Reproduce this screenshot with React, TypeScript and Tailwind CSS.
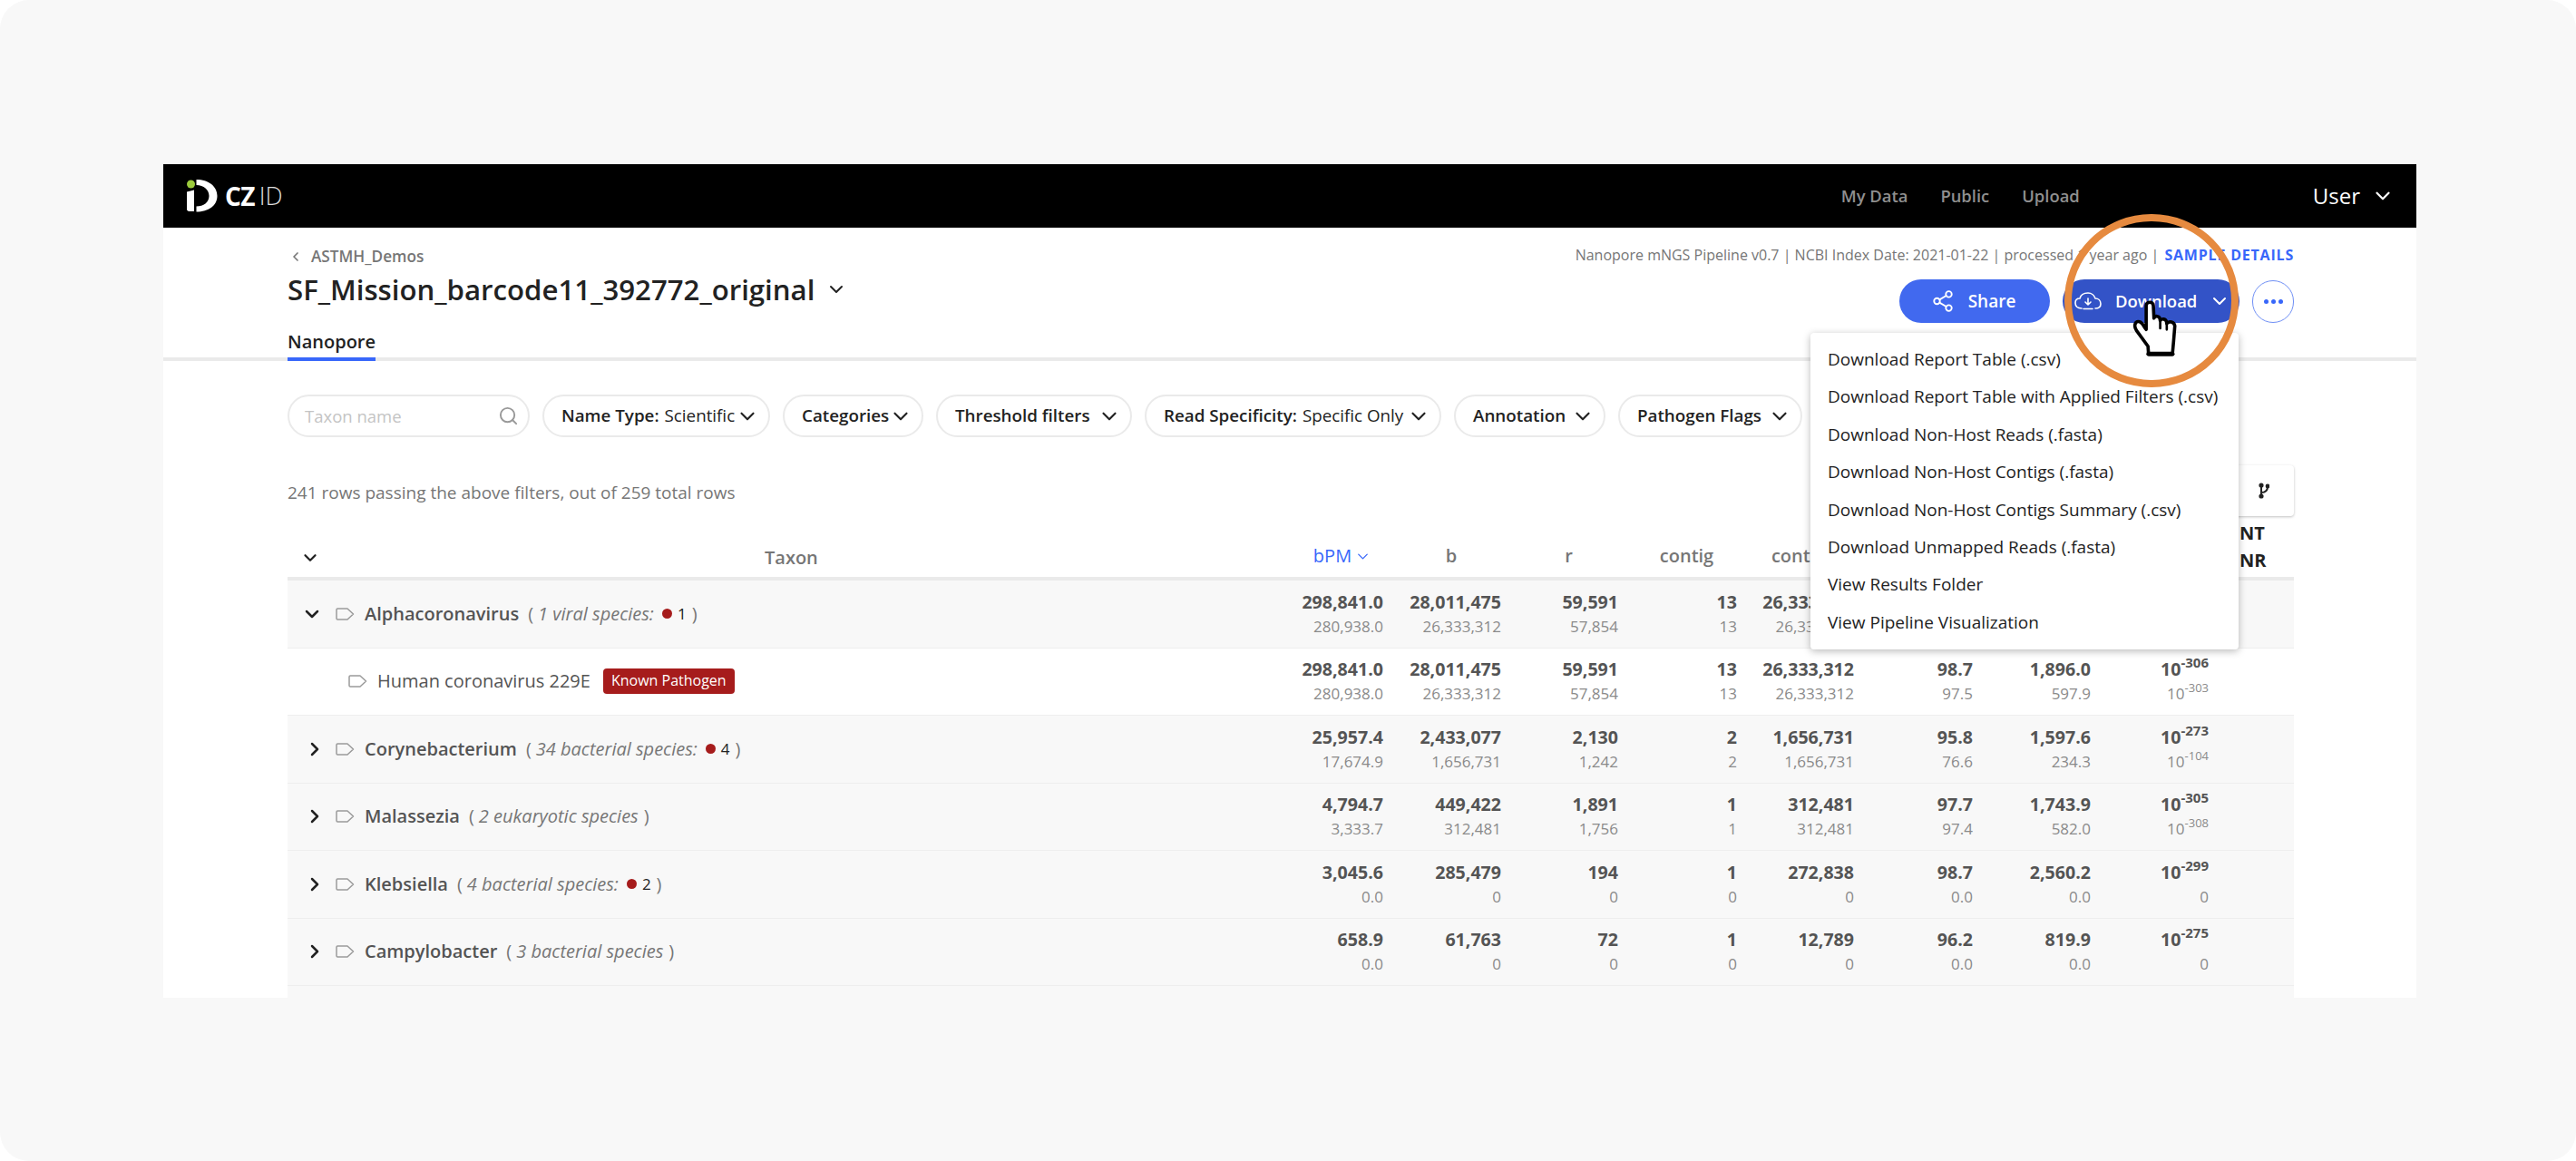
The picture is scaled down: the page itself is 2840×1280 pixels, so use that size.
import { ChevronDown, ChevronLeft, ChevronRight, Search, Share2 } from "lucide-react";

const gridCols = "grid grid-cols-[1078px_130px_130px_129px_131px_129px_131px_130px_130px_94px]";

const filters = [
  { label: "Name Type:", value: "Scientific", width: "w-[251px]" },
  { label: "Categories", width: "w-[155px]" },
  { label: "Threshold filters", width: "w-[216px]" },
  { label: "Read Specificity:", value: "Specific Only", width: "w-[327px]" },
  { label: "Annotation", width: "w-[167px]" },
  { label: "Pathogen Flags", width: "w-[203px]" },
];

const menuItems = [
  "Download Report Table (.csv)",
  "Download Report Table with Applied Filters (.csv)",
  "Download Non-Host Reads (.fasta)",
  "Download Non-Host Contigs (.fasta)",
  "Download Non-Host Contigs Summary (.csv)",
  "Download Unmapped Reads (.fasta)",
  "View Results Folder",
  "View Pipeline Visualization",
];

type Row = {
  name: string;
  detail?: string;
  pathogens?: number;
  species?: boolean;
  open?: boolean;
  white?: boolean;
  values: [string, string][];
  ntExp: string;
  nrExp: string | null;
};

const rows: Row[] = [
  {
    name: "Alphacoronavirus",
    detail: "1 viral species",
    pathogens: 1,
    open: true,
    values: [
      ["298,841.0", "280,938.0"],
      ["28,011,475", "26,333,312"],
      ["59,591", "57,854"],
      ["13", "13"],
      ["26,333,312", "26,333,312"],
      ["98.7", "97.5"],
      ["1,896.0", "597.9"],
    ],
    ntExp: "-306",
    nrExp: "-303",
  },
  {
    name: "Human coronavirus 229E",
    species: true,
    white: true,
    values: [
      ["298,841.0", "280,938.0"],
      ["28,011,475", "26,333,312"],
      ["59,591", "57,854"],
      ["13", "13"],
      ["26,333,312", "26,333,312"],
      ["98.7", "97.5"],
      ["1,896.0", "597.9"],
    ],
    ntExp: "-306",
    nrExp: "-303",
  },
  {
    name: "Corynebacterium",
    detail: "34 bacterial species",
    pathogens: 4,
    values: [
      ["25,957.4", "17,674.9"],
      ["2,433,077", "1,656,731"],
      ["2,130", "1,242"],
      ["2", "2"],
      ["1,656,731", "1,656,731"],
      ["95.8", "76.6"],
      ["1,597.6", "234.3"],
    ],
    ntExp: "-273",
    nrExp: "-104",
  },
  {
    name: "Malassezia",
    detail: "2 eukaryotic species",
    values: [
      ["4,794.7", "3,333.7"],
      ["449,422", "312,481"],
      ["1,891", "1,756"],
      ["1", "1"],
      ["312,481", "312,481"],
      ["97.7", "97.4"],
      ["1,743.9", "582.0"],
    ],
    ntExp: "-305",
    nrExp: "-308",
  },
  {
    name: "Klebsiella",
    detail: "4 bacterial species",
    pathogens: 2,
    values: [
      ["3,045.6", "0.0"],
      ["285,479", "0"],
      ["194", "0"],
      ["1", "0"],
      ["272,838", "0"],
      ["98.7", "0.0"],
      ["2,560.2", "0.0"],
    ],
    ntExp: "-299",
    nrExp: null,
  },
  {
    name: "Campylobacter",
    detail: "3 bacterial species",
    values: [
      ["658.9", "0.0"],
      ["61,763", "0"],
      ["72", "0"],
      ["1", "0"],
      ["12,789", "0"],
      ["96.2", "0.0"],
      ["819.9", "0.0"],
    ],
    ntExp: "-275",
    nrExp: null,
  },
];

function TagIcon() {
  return (
    <svg width="21" height="14" viewBox="0 0 21 14" fill="none" stroke="#9a9a9a" strokeWidth="1.5" className="shrink-0">
      <path d="M1 2.2C1 1.5 1.5 1 2.2 1H13L19.5 7L13 13H2.2C1.5 13 1 12.5 1 11.8Z" strokeLinejoin="round" />
    </svg>
  );
}

function Logo() {
  return (
    <svg width="34" height="36" viewBox="0 0 34 36" className="shrink-0">
      <circle cx="4.5" cy="5" r="4.5" fill="#9ccb3c" />
      <path d="M0 13.5L8 11.5V35H2.5C1 35 0 34 0 32.5Z" fill="#fff" />
      <path d="M10.5 0C24 0 33.5 7.5 33.5 18C33.5 28.5 24 35.5 10.5 35.5V29.5C18.5 29.5 24.5 25 24.5 18C24.5 11 18.5 6 10.5 6Z" fill="#fff" />
    </svg>
  );
}

function HandCursor() {
  return (
    <svg width="50" height="62" viewBox="-6 -6 152 188" fill="#fff" stroke="#000" strokeWidth="11" strokeLinejoin="round" strokeLinecap="round">
      <path d="M40 12C40 -3 64 -3 64 12L66 54C70 44 84 46 86 56L87 62C92 54 106 56 108 66L109 72C116 62 134 66 136 80L132 130L128 174H48L46 148L8 96C-4 78 4 62 18 66C26 68 30 78 40 92Z" />
      <path d="M48 174H128" strokeWidth="15" />
      <path d="M87 62V88M109 72V92" fill="none" strokeWidth="8" />
    </svg>
  );
}

function FilterButton({ label, value, width }: (typeof filters)[number]) {
  return (
    <button className={`${width} h-[47px] shrink-0 rounded-[24px] border-2 border-[#eaeaea] bg-white pl-[19px] pr-[10px] flex items-center justify-between text-[18.8px] text-[#222]`}>
      <span className="whitespace-nowrap">
        <span className="font-semibold">{label}</span>
        {value && <span className="ml-[6px]">{value}</span>}
      </span>
      <ChevronDown size={26} strokeWidth={2} className="shrink-0 -ml-[6px]" />
    </button>
  );
}

function TaxonCell({ row }: { row: Row }) {
  if (row.species) {
    return (
      <div className="flex items-center pl-[67px] text-[20px] text-[#545454]">
        <TagIcon />
        <span className="ml-[11px]">{row.name}</span>
        <span className="ml-[14px] h-[28px] rounded-[4px] bg-[#a61c1c] px-[9px] text-[16px] leading-[27px] text-white">
          Known Pathogen
        </span>
      </div>
    );
  }
  return (
    <div className="flex items-center pl-[16px] text-[20px] text-[#545454]">
      <span className="w-[37px] shrink-0 flex items-center">
        {row.open ? (
          <ChevronDown size={24} strokeWidth={2.5} className="text-[#222] -ml-[1px]" />
        ) : (
          <ChevronRight size={24} strokeWidth={2.5} className="text-[#222] ml-[2px]" />
        )}
      </span>
      <TagIcon />
      <span className="ml-[11px] font-semibold">{row.name}</span>
      <span className="ml-[10px] flex items-center font-normal text-[#767676]">
        <span>(</span>
        <span className="ml-[5px] italic">
          {row.detail}
          {row.pathogens ? ":" : ""}
        </span>
        {row.pathogens ? (
          <>
            <span className="ml-[9px] h-[11px] w-[11px] rounded-full bg-[#a61c1c]" />
            <span className="ml-[6px] text-[17px] text-[#222]">{row.pathogens}</span>
          </>
        ) : null}
        <span className="ml-[6px]">)</span>
      </span>
    </div>
  );
}

function ValueCell({ top, bottom }: { top: React.ReactNode; bottom: React.ReactNode }) {
  return (
    <div className="flex flex-col items-end justify-center">
      <span className="text-[19.6px] leading-[27px] font-bold text-[#545454]">{top}</span>
      <span className="text-[17px] leading-[27px] text-[#8a8a8a]">{bottom}</span>
    </div>
  );
}

function Exp({ value, small }: { value: string; small?: boolean }) {
  return (
    <>
      10
      <sup className={`${small ? "text-[13px] -top-[8px]" : "text-[15px] -top-[9px]"} relative align-baseline leading-none`}>{value}</sup>
    </>
  );
}

export default function App() {
  return (
    <div className="bg-white">
      <div className="relative w-[2840px] h-[1280px] overflow-hidden rounded-[32px] bg-[#f8f8f8] pt-[181px] pl-[180px] font-['Open_Sans',sans-serif]">
        <div className="w-[2484px] h-[919px] overflow-hidden bg-white">
          {/* Top bar */}
          <header className="h-[70px] bg-black flex items-center pl-[26px] pr-[24px]">
            <Logo />
            <span className="ml-[8px] text-[28px] font-bold tracking-tight text-white">CZ</span>
            <span className="ml-[5px] text-[27px] font-light text-[#dddddd]">ID</span>
            <nav className="ml-auto flex items-center gap-[36px] text-[18.4px] font-semibold text-[#8f8f8f]">
              <span>My Data</span>
              <span>Public</span>
              <span>Upload</span>
            </nav>
            <span className="ml-[257px] text-[24px] text-white">User</span>
            <ChevronDown size={26} strokeWidth={2} className="ml-[12px] text-white" />
          </header>

          {/* Sample header */}
          <div className="h-[147px] border-b-4 border-[#eaeaea] flex justify-between pl-[137px] pr-[135px]">
            <div className="flex flex-col">
              <div className="mt-[19px] flex items-center text-[17.2px] font-semibold text-[#767676]">
                <ChevronLeft size={16} strokeWidth={2.5} className="mr-[9px] ml-[1px]" />
                ASTMH_Demos
              </div>
              <div className="mt-[2px] flex items-center text-[31.2px] font-semibold leading-[42px] text-[#222]">
                SF_Mission_barcode11_392772_original
                <ChevronDown size={24} strokeWidth={2} className="ml-[12px]" />
              </div>
              <div className="mt-auto -mb-[4px] self-start border-b-[4px] border-[#3867fa] pb-[2px] text-[20px] font-semibold text-[#222]">
                Nanopore
              </div>
            </div>
            <div className="flex flex-col items-end">
              <div className="mt-[19px] text-[16px] leading-[22px] text-[#767676]">
                Nanopore mNGS Pipeline v0.7 | NCBI Index Date: 2021-01-22 | processed 1 year ago |{" "}
                <span className="ml-[2px] font-bold tracking-[0.8px] text-[#3867fa]">SAMPLE DETAILS</span>
              </div>
              <div className="mt-[16px] flex items-center">
                <button className="flex h-[48px] w-[166px] items-center justify-center gap-[15px] rounded-[24px] bg-[#4169ef] pr-[3px] text-[19px] font-semibold text-white">
                  <Share2 size={26} strokeWidth={1.7} />
                  Share
                </button>
                <button className="ml-[14px] flex h-[48px] w-[195px] items-center rounded-[24px] bg-[#3353c7] pl-[13px] text-[18.5px] font-semibold text-white">
                  <svg width="30" height="20" viewBox="0 0 30 20" fill="none" stroke="#fff" strokeWidth="1.6" strokeLinecap="round" strokeLinejoin="round">
                    <path d="M8 18C3 18 1 15 1 12C1 9 3 7 6 7C7 3 11 1 15 1C19 1 22 4 23 7C26 7 29 9 29 13C29 16 27 18 23 18" />
                    <path d="M15 7V14M12 11L15 14L18 11M10 18.5H20" />
                  </svg>
                  <span className="ml-[15px]">Download</span>
                  <ChevronDown size={24} strokeWidth={2} className="ml-[13px]" />
                </button>
                <button className="ml-[14px] flex h-[47px] w-[46px] items-center justify-center gap-[3px] rounded-full border border-[#6f8ff5] bg-white">
                  <span className="h-[5px] w-[5px] rounded-full bg-[#3867fa]" />
                  <span className="h-[5px] w-[5px] rounded-full bg-[#3867fa]" />
                  <span className="h-[5px] w-[5px] rounded-full bg-[#3867fa]" />
                </button>
              </div>
            </div>
          </div>

          {/* Filters and table */}
          <div className="ml-[137px] w-[2212px]">
            <div className="mt-[37px] flex items-center gap-[14px]">
              <div className="h-[47px] w-[267px] shrink-0 rounded-[24px] border-2 border-[#eaeaea] pl-[17px] pr-[10px] flex items-center justify-between text-[18.5px] text-[#c4c4c4]">
                Taxon name
                <Search size={23} strokeWidth={2} className="text-[#999]" />
              </div>
              {filters.map((f) => (
                <FilterButton key={f.label} {...f} />
              ))}
            </div>

            <div className="mt-[31px] flex h-[56px] items-center justify-between">
              <span className="pt-[4px] text-[19px] text-[#767676]">241 rows passing the above filters, out of 259 total rows</span>
              <div className="flex h-[56px] w-[130px] items-center justify-end rounded-[4px] bg-white pr-[27px] shadow-[0_1px_3px_rgba(0,0,0,0.25)]">
                <svg width="12" height="18" viewBox="0 0 12 18" fill="none" stroke="#222" strokeWidth="2">
                  <circle cx="3" cy="3" r="1.6" fill="#222" />
                  <circle cx="3" cy="15" r="1.6" fill="#222" />
                  <circle cx="10" cy="4" r="1.4" fill="#222" />
                  <path d="M3 3V15M3 11C7 11 10 9 10 4" />
                </svg>
              </div>
            </div>

            <div className={`${gridCols} h-[71px] border-b-4 border-[#eaeaea] text-[20px] font-semibold text-[#767676]`}>
              <div className="flex items-end pb-[8px] pl-[14px]">
                <ChevronDown size={22} strokeWidth={2.5} className="mb-[2px] text-[#222]" />
                <span className="ml-[490px] leading-[26px]">Taxon</span>
              </div>
              <div className="flex items-end justify-center gap-[3px] pb-[10px] pl-[40px] leading-[26px] font-normal text-[#3867fa]">
                bPM
                <ChevronDown size={19} strokeWidth={1.6} className="mb-[3px]" />
              </div>
              <div className="flex items-end justify-center pb-[10px] pl-[20px] leading-[26px]">b</div>
              <div className="flex items-end justify-center pb-[10px] pl-[20px] leading-[26px]">r</div>
              <div className="flex items-end justify-center pb-[10px] pl-[20px] leading-[26px]">contig</div>
              <div className="flex items-end justify-center pb-[10px] pl-[20px] leading-[26px]">contig r</div>
              <div />
              <div />
              <div />
              <div className="pl-[34px] pt-[4px] text-[20px] font-bold leading-[30px] text-[#222]">
                NT
                <br />
                NR
              </div>
            </div>

            {rows.map((row) => (
              <div
                key={row.name}
                className={`${gridCols} h-[74.5px] items-center border-b border-[#eeeeee] ${row.white ? "bg-white" : "bg-[#f8f8f8]"}`}
              >
                <TaxonCell row={row} />
                {row.values.map((v, i) => (
                  <ValueCell key={i} top={v[0]} bottom={v[1]} />
                ))}
                <ValueCell top={<Exp value={row.ntExp} />} bottom={row.nrExp ? <Exp value={row.nrExp} small /> : "0"} />
                <div />
              </div>
            ))}
            <div className="h-[20px] bg-[#f8f8f8]" />
          </div>
        </div>

        {/* Download menu */}
        <div className="absolute left-[1996px] top-[367px] w-[472px] rounded-[4px] bg-white py-[9px] shadow-[0_2px_8px_rgba(0,0,0,0.28)]">
          {menuItems.map((item) => (
            <div key={item} className="h-[41.4px] pl-[19px] text-[19px] leading-[41.4px] text-[#222] whitespace-nowrap">
              {item}
            </div>
          ))}
        </div>

        {/* Call-out ring and pointer */}
        <div className="absolute left-[2276px] top-[236px] h-[191px] w-[192px] rounded-full border-[8px] border-[#e68a3f]" />
        <div className="absolute left-[2351px] top-[331px]">
          <HandCursor />
        </div>
      </div>
    </div>
  );
}
